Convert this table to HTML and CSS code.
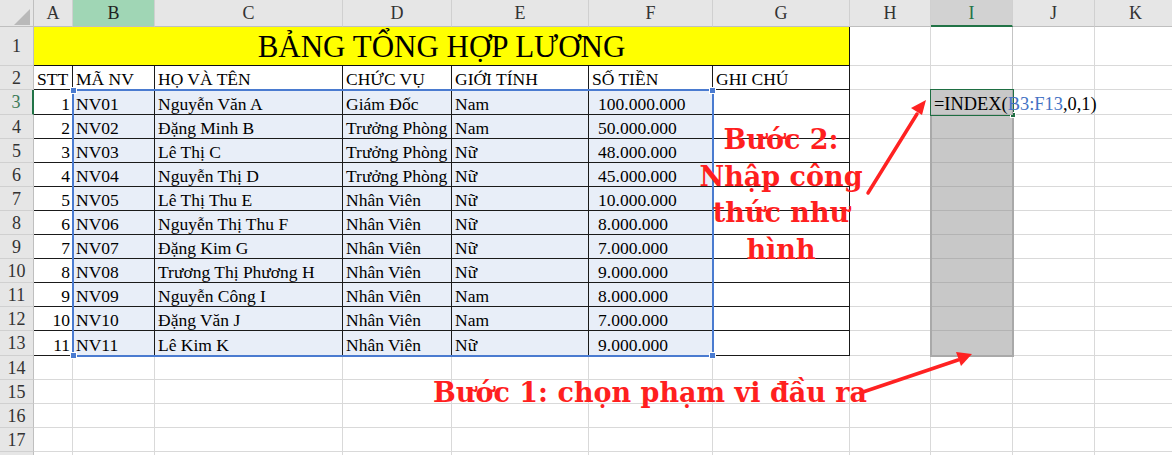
FILE: index.html
```
<!DOCTYPE html>
<html lang="vi">
<head>
<meta charset="utf-8">
<title>Bảng tổng hợp lương</title>
<link rel="stylesheet" href="styles.css">
</head>
<body>
<div class="sheet">
  <div class="row colhdr">
    <div class="corner"><span class="tri"></span></div>
    <div>A</div><div class="hl-b">B</div><div>C</div><div>D</div><div>E</div><div>F</div><div>G</div><div>H</div><div class="hl-i">I</div><div>J</div><div>K</div>
  </div>
  <div class="row r1">
    <div class="rh">1</div>
    <div class="title">BẢNG TỔNG HỢP LƯƠNG</div>
    <div></div><div class="gc"></div><div></div><div></div>
  </div>
  <div class="row">
    <div class="rh">2</div>
    <div class="t">STT</div><div class="t">MÃ NV</div><div class="t">HỌ VÀ TÊN</div><div class="t">CHỨC VỤ</div><div class="t">GIỚI TÍNH</div><div class="t">SỐ TIỀN</div><div class="t">GHI CHÚ</div>
    <div></div><div class="gc"></div><div></div><div></div>
  </div>
  <div class="row r3">
    <div class="rh active">3</div>
    <div class="t num">1</div><div class="t s">NV01</div><div class="t s">Nguyễn Văn A</div><div class="t s">Giám Đốc</div><div class="t s">Nam</div><div class="t s money">100.000.000</div><div class="t"></div>
    <div></div><div class="gc formula"><span class="ftext">=INDEX(<span class="ref">B3:F13</span>,0,1)</span></div><div></div><div></div>
  </div>
  <div class="row">
    <div class="rh">4</div>
    <div class="t num">2</div><div class="t s">NV02</div><div class="t s">Đặng Minh B</div><div class="t s">Trưởng Phòng</div><div class="t s">Nam</div><div class="t s money">50.000.000</div><div class="t"></div>
    <div></div><div class="gc"></div><div></div><div></div>
  </div>
  <div class="row">
    <div class="rh">5</div>
    <div class="t num">3</div><div class="t s">NV03</div><div class="t s">Lê Thị C</div><div class="t s">Trưởng Phòng</div><div class="t s">Nữ</div><div class="t s money">48.000.000</div><div class="t"></div>
    <div></div><div class="gc"></div><div></div><div></div>
  </div>
  <div class="row">
    <div class="rh">6</div>
    <div class="t num">4</div><div class="t s">NV04</div><div class="t s">Nguyễn Thị D</div><div class="t s">Trưởng Phòng</div><div class="t s">Nữ</div><div class="t s money">45.000.000</div><div class="t"></div>
    <div></div><div class="gc"></div><div></div><div></div>
  </div>
  <div class="row">
    <div class="rh">7</div>
    <div class="t num">5</div><div class="t s">NV05</div><div class="t s">Lê Thị Thu E</div><div class="t s">Nhân Viên</div><div class="t s">Nữ</div><div class="t s money">10.000.000</div><div class="t"></div>
    <div></div><div class="gc"></div><div></div><div></div>
  </div>
  <div class="row">
    <div class="rh">8</div>
    <div class="t num">6</div><div class="t s">NV06</div><div class="t s">Nguyễn Thị Thu F</div><div class="t s">Nhân Viên</div><div class="t s">Nữ</div><div class="t s money">8.000.000</div><div class="t"></div>
    <div></div><div class="gc"></div><div></div><div></div>
  </div>
  <div class="row">
    <div class="rh">9</div>
    <div class="t num">7</div><div class="t s">NV07</div><div class="t s">Đặng Kim G</div><div class="t s">Nhân Viên</div><div class="t s">Nữ</div><div class="t s money">7.000.000</div><div class="t"></div>
    <div></div><div class="gc"></div><div></div><div></div>
  </div>
  <div class="row">
    <div class="rh">10</div>
    <div class="t num">8</div><div class="t s">NV08</div><div class="t s">Trương Thị Phương H</div><div class="t s">Nhân Viên</div><div class="t s">Nữ</div><div class="t s money">9.000.000</div><div class="t"></div>
    <div></div><div class="gc"></div><div></div><div></div>
  </div>
  <div class="row">
    <div class="rh">11</div>
    <div class="t num">9</div><div class="t s">NV09</div><div class="t s">Nguyễn Công I</div><div class="t s">Nhân Viên</div><div class="t s">Nam</div><div class="t s money">8.000.000</div><div class="t"></div>
    <div></div><div class="gc"></div><div></div><div></div>
  </div>
  <div class="row">
    <div class="rh">12</div>
    <div class="t num">10</div><div class="t s">NV10</div><div class="t s">Đặng Văn J</div><div class="t s">Nhân Viên</div><div class="t s">Nam</div><div class="t s money">7.000.000</div><div class="t"></div>
    <div></div><div class="gc"></div><div></div><div></div>
  </div>
  <div class="row r13">
    <div class="rh">13</div>
    <div class="t num">11</div><div class="t s">NV11</div><div class="t s">Lê Kim K</div><div class="t s">Nhân Viên</div><div class="t s">Nữ</div><div class="t s money">9.000.000</div><div class="t"></div>
    <div></div><div class="gc"></div><div></div><div></div>
  </div>
  <div class="row">
    <div class="rh">14</div>
    <div></div><div></div><div></div><div></div><div></div><div></div><div></div><div></div><div></div><div></div><div></div>
  </div>
  <div class="row">
    <div class="rh">15</div>
    <div></div><div></div><div></div><div></div><div></div><div></div><div></div><div></div><div></div><div></div><div></div>
  </div>
  <div class="row">
    <div class="rh">16</div>
    <div></div><div></div><div></div><div></div><div></div><div></div><div></div><div></div><div></div><div></div><div></div>
  </div>
  <div class="row">
    <div class="rh">17</div>
    <div></div><div></div><div></div><div></div><div></div><div></div><div></div><div></div><div></div><div></div><div></div>
  </div>
  <div class="row">
    <div class="rh"></div>
    <div></div><div></div><div></div><div></div><div></div><div></div><div></div><div></div><div></div><div></div><div></div>
  </div>

  <div class="selbox">
    <span class="hdl h-tl"></span><span class="hdl h-tr"></span><span class="hdl h-bl"></span><span class="hdl h-br"></span>
  </div>
  <div class="graybox"></div>
  <div class="activebox"><span class="fill"></span></div>

  <div class="note note2">Bước 2:<br>Nhập công<br>thức như<br>hình</div>
  <div class="note note1">Bước 1: chọn phạm vi đầu ra</div>

  <svg class="arrows" width="1172" height="455" viewBox="0 0 1172 455">
    <line x1="868" y1="193" x2="917" y2="114" stroke="#ff2222" stroke-width="3.5" stroke-linecap="round"/>
    <polygon points="926,100 911,108 922,115" fill="#ff2222"/>
    <line x1="860" y1="393" x2="958" y2="360" stroke="#ff2222" stroke-width="3.5" stroke-linecap="round"/>
    <polygon points="972,354 956,352 961,366" fill="#ff2222"/>
  </svg>
</div>
</body>
</html>
```

FILE: styles.css
```
* { box-sizing: border-box; }
html, body { margin: 0; padding: 0; background: #ffffff; }
body { font-family: "Liberation Serif", "Times New Roman", serif; color: #000; }

.sheet {
  position: relative;
  width: 1172px;
  height: 455px;
  overflow: hidden;
}

.row {
  display: grid;
  grid-template-columns: 34px 39px 82px 188px 109px 137px 124px 137px 81px 82px 82px 82px;
  height: 24px;
}
.row.r1 { height: 39px; }
.row.r3, .row.r13 { height: 25px; }

.row > div {
  border-right: 1px solid #d9d9d9;
  border-bottom: 1px solid #d9d9d9;
  font-size: 17.5px;
  line-height: 20px;
  padding: 0 3px;
  display: flex;
  align-items: flex-end;
  white-space: nowrap;
  overflow: hidden;
}

/* column header */
.row.colhdr { height: 27px; }
.row.colhdr > div {
  background: #e6e6e6;
  border-bottom: 1px solid #bfbfbf;
  border-right: 1px solid #d0d0d0;
  justify-content: center;
  align-items: center;
  font-size: 18px;
  color: #333;
}
.row.colhdr > div.corner {
  justify-content: flex-end;
  align-items: flex-end;
  padding: 0 3px 1px 0;
  border-right-color: #bfbfbf;
}
.tri {
  width: 0;
  height: 0;
  border-left: 16px solid transparent;
  border-bottom: 16px solid #b9b9b9;
}
.row.colhdr > div.hl-b { background: #a0d6b5; color: #222; }
.row.colhdr > div.hl-i {
  background: #d2d2d2;
  color: #217346;
  border-bottom: 2px solid #217346;
}

/* row header */
.row > div.rh {
  background: #e6e6e6;
  border-right: 1px solid #bfbfbf;
  border-bottom: 1px solid #d0d0d0;
  justify-content: center;
  align-items: center;
  font-size: 18px;
  color: #333;
  padding: 0;
}
.row > div.rh.active {
  color: #3b7a57;
  border-right: 2px solid #217346;
}

/* title */
.row > div.title {
  grid-column: span 7;
  background: #ffff00;
  border-right: 1px solid #111;
  border-bottom: 1px solid #111;
  justify-content: center;
  font-size: 31px;
  line-height: 36px;
}

/* table cells */
.row > div.t {
  border-right: 1px solid #1a1a1a;
  border-bottom: 1px solid #1a1a1a;
}
.row > div.num { justify-content: flex-end; padding-right: 2px; }
.row > div.s { background: #e8eef8; }
.row > div.money { padding-left: 9px; }

/* output column I */
.row > div.gc {
  border-right-color: #c4c4c4;
}
.row.r3 > div.gc,
.row.r3 ~ .row > div.gc {
  background: #c8c8c8;
  border-bottom-color: #b3b3b3;
  border-right-color: #a8a8a8;
}
.row > div.formula {
  overflow: visible;
  position: relative;
  z-index: 2;
}
.ftext { font-size: 18.4px; }
.ref { color: #4472c4; }

/* overlays */
.selbox {
  position: absolute;
  left: 72px;
  top: 89px;
  width: 642px;
  height: 268px;
  border: 2px solid #4a7bd0;
}
.hdl {
  position: absolute;
  width: 7px;
  height: 7px;
  background: #4a7bd0;
  border: 1px solid #ffffff;
}
.h-tl { left: -4px; top: -4px; }
.h-tr { right: -4px; top: -4px; }
.h-bl { left: -4px; bottom: -4px; }
.h-br { right: -4px; bottom: -4px; }

.graybox {
  position: absolute;
  left: 930px;
  top: 89px;
  width: 84px;
  height: 268px;
  border: 2px solid #a9a9a9;
}
.activebox {
  position: absolute;
  left: 930px;
  top: 89px;
  width: 84px;
  height: 27px;
  border: 2px solid #1e6e42;
  z-index: 1;
}
.fill {
  position: absolute;
  right: -4px;
  bottom: -4px;
  width: 6px;
  height: 6px;
  background: #1e6e42;
  border: 1px solid #ffffff;
}

.note {
  position: absolute;
  font-family: "DejaVu Serif", serif;
  font-weight: bold;
  font-size: 27px;
  line-height: 36.5px;
  color: #ff1f1f;
  white-space: nowrap;
  z-index: 3;
}
.note2 {
  left: 681px;
  top: 122px;
  width: 200px;
  text-align: center;
}
.note1 {
  left: 433px;
  top: 375px;
}

.arrows {
  position: absolute;
  left: 0;
  top: 0;
  pointer-events: none;
  z-index: 4;
}
```
